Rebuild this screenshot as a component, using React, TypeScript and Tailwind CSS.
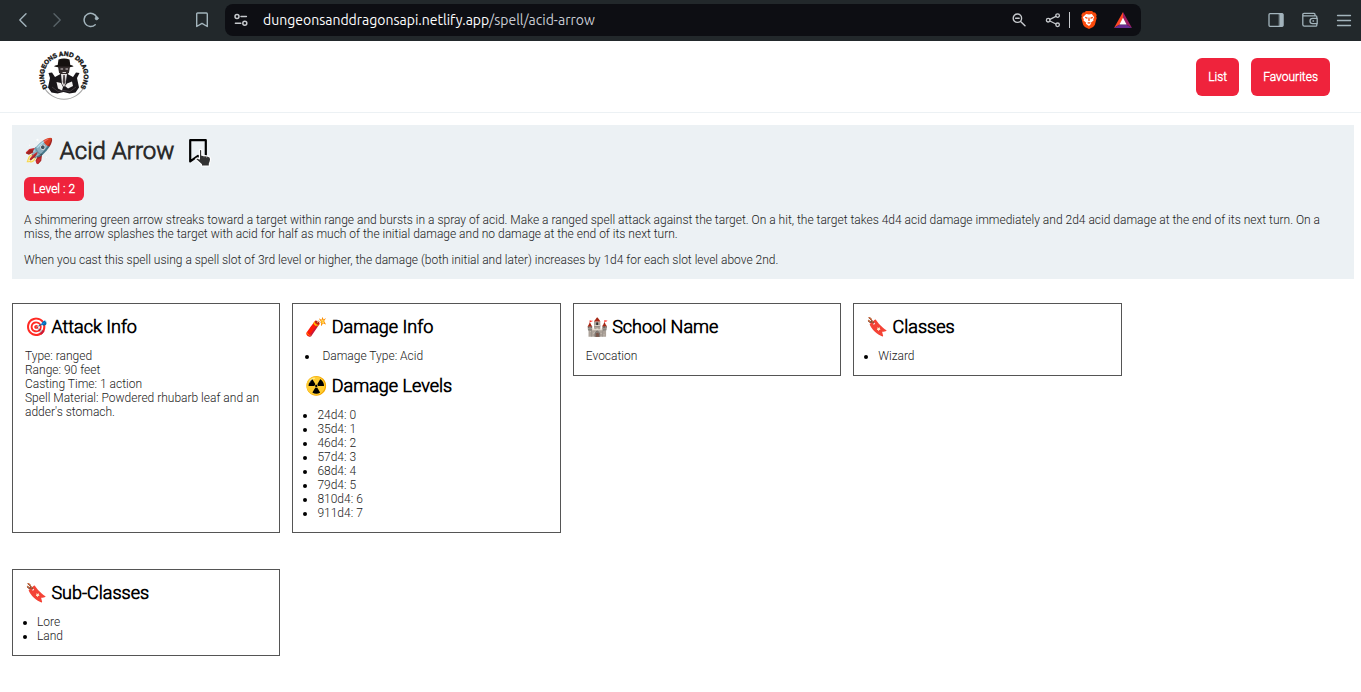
import React from "react";

type IconProps = { className?: string };

const stroke = {
  fill: "none",
  stroke: "currentColor",
  strokeLinecap: "round" as const,
  strokeLinejoin: "round" as const,
};

function BackIcon() {
  return (
    <svg className="h-4 w-4" viewBox="0 0 16 16" {...stroke} strokeWidth="1.4">
      <path d="M11 1.8 4.8 8l6.2 6.2" />
    </svg>
  );
}

function ForwardIcon() {
  return (
    <svg className="h-4 w-4" viewBox="0 0 16 16" {...stroke} strokeWidth="1.4">
      <path d="M5 1.8 11.2 8 5 14.2" />
    </svg>
  );
}

function ReloadIcon() {
  return (
    <svg className="h-4 w-4" viewBox="0 0 16 16" {...stroke} strokeWidth="1.5">
      <path d="M12.200 12.800A6.600 6.600 0 1 1 13.800 5.400" />
      <circle cx="13.700" cy="6.300" r="1.600" fill="currentColor" strokeWidth="0.600" />
    </svg>
  );
}

function TabBookmarkIcon() {
  return (
    <svg className="h-4 w-4" viewBox="0 0 16 16" {...stroke} strokeWidth="1.4">
      <path d="M3.6 1h8.8a.9.9 0 0 1 .9.9v12.6L8 11.4l-5.3 3.1V1.9A.9.9 0 0 1 3.6 1z" />
    </svg>
  );
}

function TuneIcon() {
  return (
    <svg className="h-4 w-4" viewBox="0 0 16 16" {...stroke} strokeWidth="1.5">
      <circle cx="4" cy="4.6" r="2" />
      <path d="M8 4.6h5.400M2.400 11.200h5.400" />
      <circle cx="11.800" cy="11.200" r="2" />
    </svg>
  );
}

function ZoomOutIcon() {
  return (
    <svg className="h-4 w-4" viewBox="0 0 16 16" {...stroke} strokeWidth="1.4">
      <circle cx="6.4" cy="6.2" r="4.2" />
      <path d="M4.6 6.2h3.6M9.6 9.4l4.4 4.4" />
    </svg>
  );
}

function ShareIcon() {
  return (
    <svg className="h-4 w-4" viewBox="0 0 16 16" {...stroke} strokeWidth="1.3">
      <circle cx="3.2" cy="8.2" r="1.8" />
      <circle cx="12.6" cy="3.6" r="1.8" />
      <circle cx="12.6" cy="12.8" r="1.8" />
      <path d="m4.9 7.4 6-3M4.9 9l6 3" />
    </svg>
  );
}

function BraveIcon() {
  return (
    <svg className="h-[18px] w-4" viewBox="0 0 16 18">
      <path
        d="M5 0h6l1.6 1.6 1.5-.2L15.7 4l-.5 1.4.5 1.5-1.9 7.2-1.7 1.8L8 18l-4.100-2.100-1.700-1.800L.3 6.900l.5-1.500L.3 4l1.600-2.600 1.500.2z"
        fill="#fb4a0b"
      />
      <path
        d="M5.200 2.900 8 3.400l2.800-.5 2.400 3.300-1 2 .3 1.400-2.700 2.200.4 1L8 15.100l-3.200-2.300.4-1-2.700-2.200.3-1.400-1-2z"
        fill="#fff"
      />
      <path
        d="M4 5.800l2.600.7-.3 1.500L4.200 7zM12 5.800l-2.600.7.3 1.500 2.100-1zM7.500 6.500h1l.3 3L8 10.200l-.8-.7zM6 12.100l2-1.100 2 1.100-2 .7z"
        fill="#fb4a0b"
      />
    </svg>
  );
}

function RewardsIcon() {
  return (
    <svg className="h-4 w-[18px]" viewBox="0 0 18 16">
      <path d="M9 0 0 16l5.600-3.400L9 6.400z" fill="#ff4724" />
      <path d="M9 0v6.400l3.400 6.200L18 16z" fill="#9e1f63" />
      <path d="M0 16h18l-5.600-3.400H5.600z" fill="#662d91" />
      <path d="M9 5.800 12.600 12.600H5.400z" fill="#fff" />
    </svg>
  );
}

function SidebarIcon() {
  return (
    <svg className="h-4 w-4" viewBox="0 0 16 16" {...stroke} strokeWidth="1.3">
      <rect x="1" y="1.700" width="14" height="12.600" rx="1" />
      <path d="M11.500 2H15v12h-3.500z" fill="currentColor" strokeWidth="0.6" />
    </svg>
  );
}

function WalletIcon() {
  return (
    <svg className="h-4 w-4" viewBox="0 0 16 16" {...stroke} strokeWidth="1.3">
      <path d="M14.800 6V4.800a1 1 0 0 0-1-1H1.600M13 3.600V2.400a1 1 0 0 0-1-1H2a1.200 1.200 0 0 0-1.200 1.200v10A1.600 1.600 0 0 0 2.400 14.200h11.400a1 1 0 0 0 1-1V12" />
      <path d="M15.200 6.400h-4.600a2.600 2.600 0 0 0 0 5.200h4.600z" />
      <path d="M11 9h.6" />
    </svg>
  );
}

function MenuIcon() {
  return (
    <svg className="h-4 w-4" viewBox="0 0 16 16" {...stroke} strokeWidth="1.300">
      <path d="M1.500 3.500h13M1.500 8.500h13M1.500 13.500h13" />
    </svg>
  );
}

function Logo() {
  return (
    <svg className="block h-[52px] w-[52px]" viewBox="0 0 52 52" role="img" aria-label="Dungeons and Dragons">
      <defs>
        <path id="logo-arc" d="M11.400 39.600A20 20 0 1 1 40.600 39.600" />
      </defs>
      <path d="M5.500 36a22.500 22.500 0 0 0 41 0" fill="none" stroke="#a8a8a8" strokeWidth="1.100" />
      <text
        fontFamily="Liberation Sans, sans-serif"
        fontSize="6.400"
        fontWeight="700"
        fill="#151515"
        stroke="#151515"
        strokeWidth="0.400"
      >
        <textPath href="#logo-arc" startOffset="50%" textAnchor="middle">
          DUNGEONS AND DRAGONS
        </textPath>
      </text>
      <path d="M20.500 9.500q5.500-2 11 0l.8 5.500q3.500.6 3 1.600-9 2.800-19 0-.5-1 3.400-1.600z" fill="#15110f" />
      <path d="M20 16.500h12l-1 6-3 3.500h-4l-3-3.500z" fill="#332b2b" />
      <path d="M22.500 19h2.600M27.500 19H30M24.500 22.500h3.500" stroke="#d8d2d2" strokeWidth="1" />
      <path
        d="M10.500 23l3.500-.5 3 4.500 5.500-3 3.500 2 3.500-2 5.500 3 3-4.500 3.500.5-2.500 5 2 9.500-3.500 5-6 1-6-1.500-6 1.500-6-1-3.500-5 2-9.500z"
        fill="#19161a"
      />
      <path d="M23 24h6l-1.500 10L26 37l-2-3z" fill="#e9e5e5" />
      <path d="M25.300 25h1.500l.7 7-1.500 3-1.300-3z" fill="#4b4345" />
      <path d="M18.500 32l4.500 1 2 4-1 3.500-4-2zM34 31.500l-5 2-2 2.500 3 2.500 5-2.500z" fill="#f3f1f1" />
      <path d="M14 37l6 4.500 6-1 6 1 6-4.500" fill="none" stroke="#4a4347" strokeWidth="0.800" />
    </svg>
  );
}

function SaveIcon({ className }: IconProps) {
  return (
    <svg className={className} viewBox="0 0 20 26" fill="none" stroke="#000" strokeWidth="2.200">
      <path d="M2.200 2.200h15.600v21.200L10 17.800l-7.800 5.600z" strokeLinejoin="round" />
    </svg>
  );
}

function HandCursor({ className }: IconProps) {
  return (
    <svg className={className} viewBox="0 0 17 18">
      <path
        d="M4.400 1.600a1.200 1.200 0 0 1 2.400 0v4.600l6.200.9q2.600.6 2.600 3 0 2.800-1.200 4.400V17H6.400v-1.500L1 10.600q-.4-1.700 1.400-1.600l2 .9z"
        fill="#333"
        stroke="#fff"
        strokeWidth="1.200"
        strokeLinejoin="round"
      />
      <path d="M9 6.800v1.500M11.600 7.200v1.500" stroke="#bbb" strokeWidth="0.700" />
    </svg>
  );
}

function BrowserBar() {
  return (
    <div className="flex h-[41px] items-center bg-[#22282b] pr-[9px] pb-0.5 pl-[15px] text-[#a3b4bc]">
      <button aria-label="Back" className="mr-[18px]"><BackIcon /></button>
      <button aria-label="Forward" className="mr-[18px] text-[#596368]"><ForwardIcon /></button>
      <button aria-label="Reload"><ReloadIcon /></button>
      <button aria-label="Bookmark this page" className="mr-[15px] ml-[95px]"><TabBookmarkIcon /></button>
      <div className="flex h-8 w-[916px] items-center rounded-lg bg-[#0d0e13] pr-[9px] pl-2 text-[#c6c9cd]">
        <button aria-label="Site settings"><TuneIcon /></button>
        <p className="ml-3.5 flex-1 font-['Ubuntu','Noto_Sans',sans-serif] text-[14px] font-normal text-[#c9ccd3]">
          <span className="text-white">dungeonsanddragonsapi.netlify.app</span>/spell/acid-arrow
        </p>
        <button aria-label="Zoom"><ZoomOutIcon /></button>
        <button aria-label="Share" className="ml-[18px]"><ShareIcon /></button>
        <span className="ml-2 h-4 w-px bg-[#c6c9cd]" />
        <button aria-label="Shields" className="ml-[11px]"><BraveIcon /></button>
        <button aria-label="Rewards" className="ml-[17px]"><RewardsIcon /></button>
      </div>
      <div className="ml-auto flex items-center gap-[18px]">
        <button aria-label="Sidebar"><SidebarIcon /></button>
        <button aria-label="Wallet"><WalletIcon /></button>
        <button aria-label="Menu"><MenuIcon /></button>
      </div>
    </div>
  );
}

type CardProps = { icon: string; title: string; className?: string; children: React.ReactNode };

function CardTitle({ icon, title }: { icon: string; title: string }) {
  return (
    <h2 className="mb-3 font-['Roboto_Light','Roboto',sans-serif] text-[18px] leading-[21px] font-bold text-black">
      {icon} {title}
    </h2>
  );
}

function Card({ icon, title, className = "", children }: CardProps) {
  return (
    <section className={`w-1/5 border border-[#555] p-3 ${className}`}>
      <CardTitle icon={icon} title={title} />
      {children}
    </section>
  );
}

function Bullets({ items }: { items: string[] }) {
  return (
    <ul className="list-disc pl-3 marker:text-black">
      {items.map((item) => (
        <li key={item}>{item}</li>
      ))}
    </ul>
  );
}

const damageLevels = ["24d4: 0", "35d4: 1", "46d4: 2", "57d4: 3", "68d4: 4", "79d4: 5", "810d4: 6", "911d4: 7"];

export default function App() {
  return (
    <div className="min-h-screen bg-white font-['Roboto',sans-serif] text-[12px] leading-[14px] font-light text-[#222]">
      <BrowserBar />
      <header className="flex h-[72px] items-center justify-between border-b border-[#ecf1f4] pr-[31px] pl-[38px]">
        <a href="#home" className="pb-0.5"><Logo /></a>
        <nav className="flex gap-3 font-['Roboto_Light','Roboto',sans-serif] font-bold text-white">
          <a href="#list" className="rounded-md bg-[#ef233c] p-3">List</a>
          <a href="#favourites" className="rounded-md bg-[#ef233c] p-3">Favourites</a>
        </nav>
      </header>

      <main className="py-3 pr-[7px] pl-3">
        <section className="bg-[#ecf1f4] p-3">
          <div className="mb-3 flex items-center">
            <h1 className="font-['Roboto_Light','Roboto',sans-serif] text-[24px] leading-7 font-bold text-[#2b2b2b]">
              🚀 Acid Arrow
            </h1>
            <button aria-label="Save spell" className="relative ml-3.5">
              <SaveIcon className="h-[26px] w-5" />
              <HandCursor className="absolute top-[11px] left-[7px] h-[18px] w-[17px]" />
            </button>
          </div>
          <span className="inline-block rounded-md bg-[#ef233c] px-[9px] py-[5px] font-['Roboto_Light','Roboto',sans-serif] font-bold text-white">
            Level : 2
          </span>
          <p className="mt-3">
            A shimmering green arrow streaks toward a target within range and bursts in a spray of acid. Make a ranged
            spell attack against the target. On a hit, the target takes 4d4 acid damage immediately and 2d4 acid damage
            at the end of its next turn. On a miss, the arrow splashes the target with acid for half as much of the
            initial damage and no damage at the end of its next turn.
          </p>
          <p className="mt-3">
            When you cast this spell using a spell slot of 3rd level or higher, the damage (both initial and later)
            increases by 1d4 for each slot level above 2nd.
          </p>
        </section>

        <div className="mt-6 flex flex-wrap items-start gap-x-3 gap-y-9">
          <Card icon="🎯" title="Attack Info" className="self-stretch">
            <p>Type: ranged</p>
            <p>Range: 90 feet</p>
            <p>Casting Time: 1 action</p>
            <p>Spell Material: Powdered rhubarb leaf and an adder's stomach.</p>
          </Card>
          <Card icon="🧨" title="Damage Info">
            <ul className="mb-3 list-inside list-disc marker:text-black">
              <li>Damage Type: Acid</li>
            </ul>
            <CardTitle icon="☢️" title="Damage Levels" />
            <Bullets items={damageLevels} />
          </Card>
          <Card icon="🏰" title="School Name">
            <p>Evocation</p>
          </Card>
          <Card icon="🔖" title="Classes">
            <Bullets items={["Wizard"]} />
          </Card>
          <Card icon="🔖" title="Sub-Classes">
            <Bullets items={["Lore", "Land"]} />
          </Card>
        </div>
      </main>
    </div>
  );
}
